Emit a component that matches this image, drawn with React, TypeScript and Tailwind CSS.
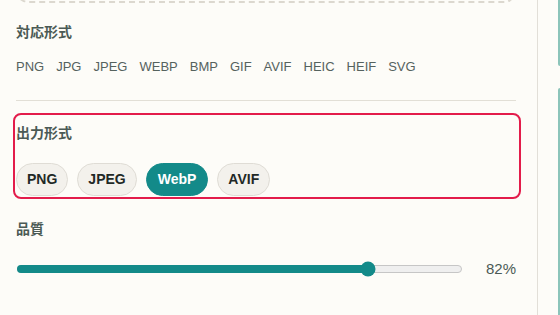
import { ReactElement } from "react";

const inputFormats = ["PNG", "JPG", "JPEG", "WEBP", "BMP", "GIF", "AVIF", "HEIC", "HEIF", "SVG"];
const outputFormats = ["PNG", "JPEG", "WebP", "AVIF"];

const font = {
  fontFamily: '"Liberation Sans", "Noto Sans CJK JP", sans-serif',
};

export default function App(): ReactElement {
  return (
    <div className="flex h-[315px] w-[560px] overflow-hidden bg-[#fdfcf8]" style={font}>
      <div className="w-[538px] shrink-0 border-r border-[#e2dfd8] pl-4 pr-[21px]">
        <div className="-mt-[40px] h-[43px] rounded-xl border-2 border-dashed border-[#dcd8cf]" />

        <h3 className="mt-[19px] text-[14px] font-bold leading-[20px] text-[#4b5a55]">対応形式</h3>
        <div className="mt-4 flex gap-3 text-[13px] leading-[18px] text-[#55625e]">
          {inputFormats.map((f) => (
            <span key={f}>{f}</span>
          ))}
        </div>

        <div className="mt-6 h-px bg-[#e2dfd6]" />

        <div className="-ml-[3px] -mr-[5px] mt-3 rounded-lg border-2 border-[#e31c4b] pb-px pl-px">
          <h3 className="mt-2 text-[14px] font-bold leading-[20px] text-[#4b5a55]">出力形式</h3>
          <div className="mt-5 flex gap-[9px]">
            {outputFormats.map((f) => (
              <button
                key={f}
                className={
                  f === "WebP"
                    ? "h-[33px] rounded-full border border-[#138a89] bg-[#138a89] px-[11px] text-[14px] font-bold text-white"
                    : "h-[33px] rounded-full border border-[#dfdcd5] bg-[#f3f1ec] px-[10px] text-[14px] font-bold text-[#1f2926]"
                }
              >
                {f}
              </button>
            ))}
          </div>
        </div>

        <h3 className="mt-5 text-[14px] font-bold leading-[20px] text-[#4b5a55]">品質</h3>
        <div className="mt-5 flex h-5 items-center">
          <div className="relative ml-px h-2 flex-1 rounded-full border border-[#c6c6c6] bg-[#efefef]">
            <div className="-m-px h-2 w-[79.1%] rounded-full bg-[#138a89]" />
            <div className="absolute left-[79.1%] top-1/2 h-[15px] w-[15px] -translate-x-1/2 -translate-y-1/2 rounded-full bg-[#138a89]" />
          </div>
          <span className="ml-6 text-[15px] text-[#4b5a55]">82%</span>
        </div>
      </div>

      <div className="flex flex-1 flex-col pl-5">
        <div className="h-[66px] rounded-bl-md border-l-2 border-[#8cc4ba]" />
        <div className="mt-[22px] flex-1 rounded-tl-md border-l-2 border-[#8cc4ba]" />
      </div>
    </div>
  );
}
